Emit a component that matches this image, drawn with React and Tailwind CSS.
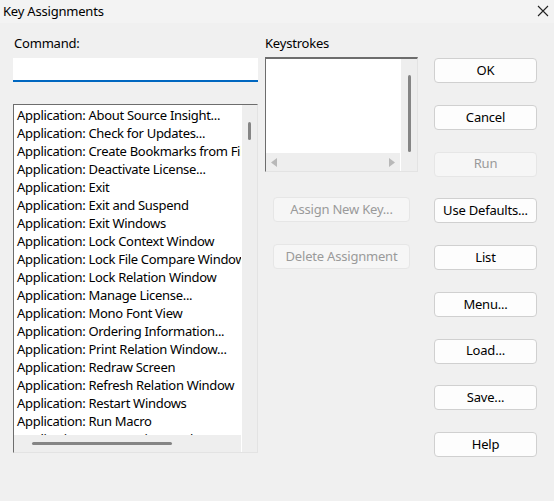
const COMMANDS = [
  "Application: About Source Insight...",
  "Application: Check for Updates...",
  "Application: Create Bookmarks from File...",
  "Application: Deactivate License...",
  "Application: Exit",
  "Application: Exit and Suspend",
  "Application: Exit Windows",
  "Application: Lock Context Window",
  "Application: Lock File Compare Window",
  "Application: Lock Relation Window",
  "Application: Manage License...",
  "Application: Mono Font View",
  "Application: Ordering Information...",
  "Application: Print Relation Window...",
  "Application: Redraw Screen",
  "Application: Refresh Relation Window",
  "Application: Restart Windows",
  "Application: Run Macro",
  "Application: Save Session Workspace...",
];

function Btn({ children, disabled, wide }) {
  return (
    <button
      className={
        (wide ? "w-[137px]" : "w-[103px]") +
        " h-[25px] rounded-[4px] border text-[13px] tracking-[-0.2px] " +
        (disabled
          ? "bg-[#f6f6f6] border-[#e6e6e6] text-[#9a9a9a]"
          : "bg-[#fdfdfd] border-[#d0d0d0] text-black")
      }
    >
      {children}
    </button>
  );
}

export default function App() {
  return (
    <div
      className="w-[554px] h-[501px] bg-[#f0f0f0] text-black flex flex-col"
      style={{ fontFamily: '"Noto Sans", "Open Sans", sans-serif' }}
    >
      {/* title bar */}
      <div className="h-[23px] bg-[#f3f3f3] flex items-center justify-between pl-[3px] pr-[4px]">
        <span className="text-[13px] tracking-[-0.2px]">Key Assignments</span>
        <svg width="14" height="14" viewBox="0 0 14 14" className="mt-[-2px]">
          <path d="M2 2L12 12M12 2L2 12" stroke="#222" strokeWidth="1.1" />
        </svg>
      </div>

      <div className="flex pt-[11px]">
        {/* command column */}
        <div className="pl-[13px] w-[265px] flex flex-col">
          <span className="text-[13px] leading-[18px] pl-[1px] tracking-[-0.2px]">Command:</span>
          <div className="mt-[6px] w-[245px] h-[24px] bg-white border-b-2 border-[#0067c0]" />
          <div className="mt-[22px] w-[245px] h-[349px] bg-white border border-t-[#6d6d6d] border-l-[#6d6d6d] border-r-[#e3e3e3] border-b-[#e3e3e3] flex overflow-hidden">
            <div className="flex-1 flex flex-col min-w-0">
              <div className="flex-1 overflow-hidden pt-[1px]">
                {COMMANDS.map((c) => (
                  <div key={c} className="h-[18px] leading-[18px] pl-[3px] text-[13px] tracking-[-0.3px] whitespace-nowrap">
                    {c}
                  </div>
                ))}
              </div>
              <div className="h-[17px] bg-[#eeeeee] flex items-center pl-[18px]">
                <div className="w-[140px] h-[3px] rounded-full bg-[#858585]" />
              </div>
            </div>
            <div className="w-[16px] bg-[#eeeeee] border-l border-white flex flex-col">
              <div className="mt-[17px] ml-[6px] w-[3px] h-[18px] rounded-full bg-[#858585]" />
            </div>
          </div>
        </div>

        {/* keystrokes column */}
        <div className="w-[169px] flex flex-col">
          <span className="text-[13px] leading-[18px] tracking-[-0.2px]">Keystrokes</span>
          <div className="mt-[5px] w-[153px] h-[115px] bg-white border border-t-[#6d6d6d] border-t-2 border-l-[#6d6d6d] border-r-[#e3e3e3] border-b-[#e3e3e3] flex overflow-hidden">
            <div className="flex-1 flex flex-col">
              <div className="flex-1" />
              <div className="h-[18px] bg-[#eeeeee] flex items-center justify-between px-[5px]">
                <svg width="7" height="9" viewBox="0 0 7 9"><path d="M6 0L0 4.5L6 9Z" fill="#b8b8b8" /></svg>
                <svg width="7" height="9" viewBox="0 0 7 9"><path d="M1 0L7 4.5L1 9Z" fill="#b8b8b8" /></svg>
              </div>
            </div>
            <div className="w-[17px] bg-[#eeeeee] border-l border-white">
              <div className="mt-[16px] ml-[7px] w-[3px] h-[77px] rounded-full bg-[#858585]" />
            </div>
          </div>
          <div className="mt-[25px] ml-[8px] flex flex-col gap-[22px]">
            <Btn disabled wide>Assign New Key...</Btn>
            <Btn disabled wide>Delete Assignment</Btn>
          </div>
        </div>

        {/* button column */}
        <div className="pt-[24px] flex flex-col gap-[21.75px]">
          <Btn>OK</Btn>
          <Btn>Cancel</Btn>
          <Btn disabled>Run</Btn>
          <Btn>Use Defaults...</Btn>
          <Btn>List</Btn>
          <Btn>Menu...</Btn>
          <Btn>Load...</Btn>
          <Btn>Save...</Btn>
          <Btn>Help</Btn>
        </div>
      </div>
    </div>
  );
}
